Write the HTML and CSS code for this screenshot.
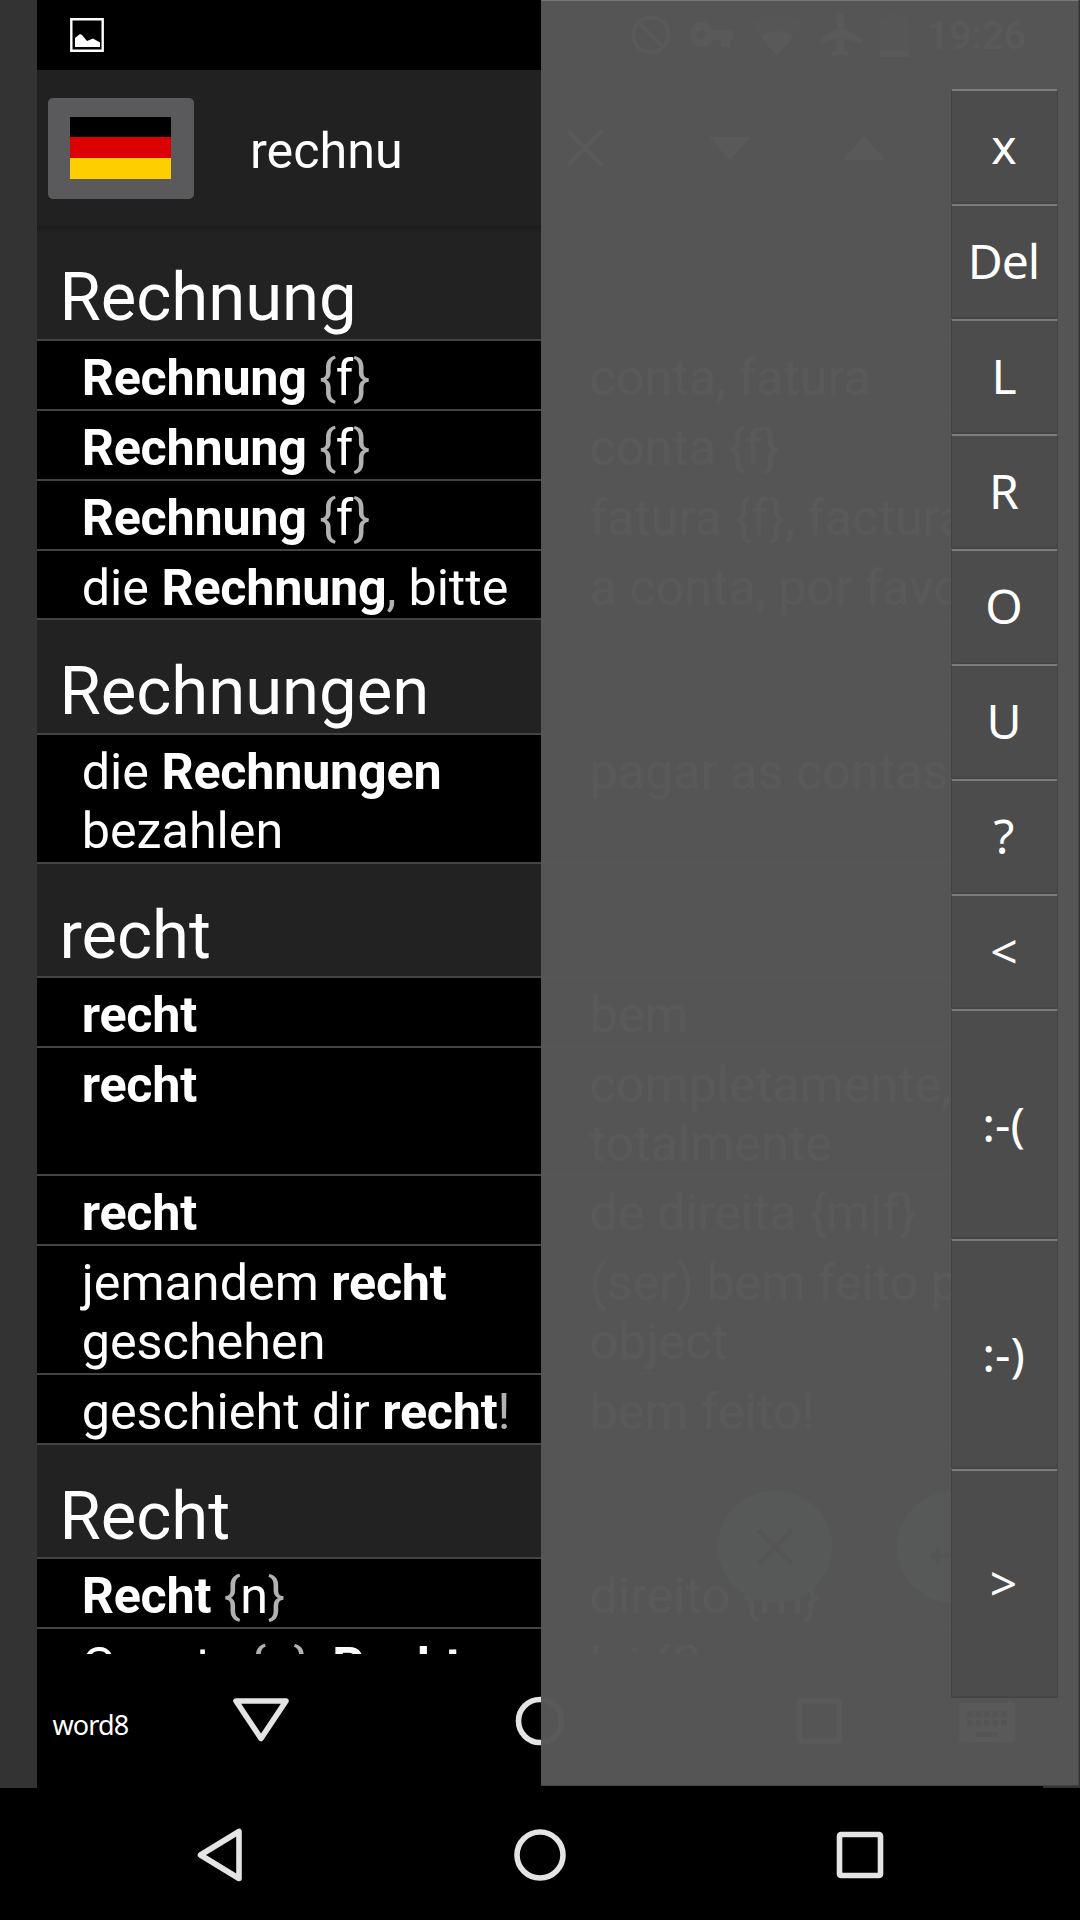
FILE: index.html
```html
<!DOCTYPE html>
<html lang="de">
<head>
<meta charset="utf-8">
<title>rechnu</title>
<link rel="stylesheet" href="styles.css">
</head>
<body>
<div class="screen">
  <div class="device">
    <main class="app">
      <header class="status">
        <svg class="picture-icon" width="34" height="34" viewBox="0 0 34 34"><path d="M1.3 1.3h31.4v31.4H1.3z" fill="none" stroke="#fff" stroke-width="2.4"/><path d="M5 29V20l5-4 2 1 5 6 6-2.500 7 4V29z" fill="#fff"/></svg>
        <div class="status-right">
          <svg width="40" height="40" viewBox="0 0 40 40" fill="none" stroke="#fff" stroke-width="3.600"><circle cx="20" cy="20" r="17.500"/><path d="M8 8l24 24"/></svg>
          <svg width="44" height="26" viewBox="0 0 44 26" fill="#fff"><path fill-rule="evenodd" d="M12.500 0a12.500 12.500 0 0 1 12 8.500H44v9h-3V25h-9v-7.500h-7.500A12.500 12.500 0 1 1 12.500 0zm0 8a4.500 4.500 0 1 0 0 9 4.500 4.500 0 0 0 0-9z"/></svg>
          <svg width="52" height="41" viewBox="0 0 52 41" fill="#fff"><path opacity=".35" d="M0 8Q26-8 52 8L26 41z"/><path d="M10 22q16-12 32 0L26 41z"/></svg>
          <svg width="41" height="42" viewBox="3 2 18 20" preserveAspectRatio="none" fill="#fff"><path d="M21 16v-2l-8-5V3.500a1.500 1.500 0 0 0-3 0V9l-8 5v2l8-2.500V19l-2 1.500V22l3.500-1 3.500 1v-1.500L13 19v-5.500z"/></svg>
          <svg width="29" height="44" viewBox="0 0 29 44" fill="#fff"><path opacity=".35" d="M9 0h11v5h9v34H0V5h9z"/><path d="M0 38h29v6H0z"/></svg>
          <span class="clock">19:26</span>
        </div>
      </header>
      <div class="search">
        <div class="lang"><div class="flag"><i class="black"></i><i class="red"></i><i class="gold"></i></div></div>
        <span class="query">rechnu</span>
        <div class="search-actions">
          <svg width="38" height="38" viewBox="0 0 38 38" stroke="#fff" stroke-width="4"><path d="M2 2l34 34M36 2L2 36"/></svg>
          <svg width="42" height="23" viewBox="0 0 42 23" fill="#fff"><path d="M0 0h42L21 23z"/></svg>
          <svg width="42" height="24" viewBox="0 0 42 24" fill="#fff"><path d="M0 24h42L21 0z"/></svg>
        </div>
      </div>
      <div class="list">
        <h2>Rechnung</h2>
        <div class="row"><p><b>Rechnung</b> <i>{</i>f<i>}</i></p><p>conta, fatura</p></div>
        <div class="row"><p><b>Rechnung</b> <i>{</i>f<i>}</i></p><p>conta <i>{</i>f<i>}</i></p></div>
        <div class="row"><p><b>Rechnung</b> <i>{</i>f<i>}</i></p><p>fatura <i>{</i>f<i>}</i>, factura</p></div>
        <div class="row"><p>die <b>Rechnung</b><i>,</i> bitte</p><p>a conta, por favor</p></div>
        <h2>Rechnungen</h2>
        <div class="row tall"><p>die <b>Rechnungen</b><br>bezahlen</p><p>pagar as contas</p></div>
        <h2>recht</h2>
        <div class="row"><p><b>recht</b></p><p>bem</p></div>
        <div class="row tall"><p><b>recht</b></p><p>completamente,<br>totalmente</p></div>
        <div class="row"><p><b>recht</b></p><p>de direita <i>{</i>m|f<i>}</i></p></div>
        <div class="row tall"><p>jemandem <b>recht</b><br>geschehen</p><p>(ser) bem feito por<br>object</p></div>
        <div class="row"><p>geschieht dir <b>recht</b><i>!</i></p><p>bem feito!</p></div>
        <h2>Recht</h2>
        <div class="row"><p><b>Recht</b> <i>{</i>n<i>}</i></p><p>direito <i>{</i>m<i>}</i></p></div>
        <div class="row"><p>Gesetz <i>{</i>n<i>}</i>, <b>Recht</b></p><p>lei <i>{</i>f<i>}</i></p></div>
        <div class="fabs">
          <svg width="114" height="112" viewBox="0 0 114 112"><ellipse cx="57" cy="56" rx="57" ry="56" fill="#80cbc4"/><path d="M40 39l34 34M74 39L40 73" stroke="#000" stroke-width="5"/></svg>
          <svg width="114" height="112" viewBox="0 0 114 112"><ellipse cx="57" cy="56" rx="57" ry="56" fill="#80cbc4"/><path d="M32 65l11-10v7h30v-14h5v19H43v8z"/></svg>
        </div>
      </div>
      <nav class="inner-nav">
        <span class="word">word8</span>
        <svg class="n-back" width="58" height="46" viewBox="0 0 58 46"><path d="M4 4h50L29 41.500z"/></svg>
        <svg class="n-home" width="50" height="50" viewBox="0 0 50 50"><circle cx="25" cy="25" r="21.500"/></svg>
        <svg class="n-recent" width="45" height="46" viewBox="0 0 45 46"><rect x="2.700" y="2.700" width="39.600" height="40.600" rx="1.500"/></svg>
        <svg class="n-keys" width="56" height="40" viewBox="0 0 56 40"><path fill-rule="evenodd" d="M4 0h48q4 0 4 4v32q0 4-4 4H4q-4 0-4-4V4q0-4 4-4zM8 9v6h6V9zm8.500 0v6h6V9zM25 9v6h6V9zm8.500 0v6h6V9zM42 9v6h6V9zM8 18v6h6v-6zm8.500 0v6h6v-6zM25 18v6h6v-6zm8.500 0v6h6v-6zM42 18v6h6v-6zM17 30v5h22v-5z"/></svg>
      </nav>
    </main>
  </div>
  <nav class="outer-nav">
    <svg class="o-back" width="48" height="56" viewBox="0 0 48 56"><path d="M4.500 28L43 4.500v47z"/></svg>
    <svg class="o-home" width="54" height="54" viewBox="0 0 54 54"><circle cx="27" cy="27" r="23"/></svg>
    <svg class="o-recent" width="48" height="48" viewBox="0 0 48 48"><rect x="3.500" y="3.500" width="41" height="41" rx="1.500"/></svg>
  </nav>
  <aside class="panel">
    <div class="keys">
      <div class="key">x</div>
      <div class="key">Del</div>
      <div class="key">L</div>
      <div class="key">R</div>
      <div class="key">O</div>
      <div class="key">U</div>
      <div class="key">?</div>
      <div class="key">&lt;</div>
      <div class="key big">:-(</div>
      <div class="key big">:-)</div>
      <div class="key big">&gt;</div>
    </div>
  </aside>
</div>
</body>
</html>
```
FILE: styles.css
```css
* { box-sizing: border-box; }
body { margin: 0; background: #000; }
svg { display: block; flex: none; }
i { font-style: normal; }

.screen {
  position: relative;
  width: 1080px;
  height: 1920px;
  overflow: hidden;
  background: #000;
  color: #fff;
  font-family: Roboto, sans-serif;
}
.device {
  height: 1788px;
  padding: 0 37px;
  background: #333;
}
.app {
  display: flex;
  flex-direction: column;
  height: 1788px;
  background: #000;
}

/* status bar */
.status {
  display: flex;
  align-items: center;
  justify-content: space-between;
  height: 70px;
  padding: 0 17px 0 33px;
}
.status-right { display: flex; align-items: center; gap: 18px; }
.clock { font-size: 39px; font-weight: 500; line-height: 70px; padding-top: 2px; }

/* search bar */
.search {
  display: flex;
  align-items: center;
  height: 156.400px;
  padding: 0 158px 0 11px;
  background: #212121;
}
.lang {
  display: flex;
  width: 146px;
  height: 101px;
  padding: 19px 22.500px 20px 22px;
  border-radius: 5px;
  background: #5a5a5c;
}
.flag { display: flex; flex-direction: column; width: 101px; }
.flag i { flex: 1; }
.black { background: #000; }
.red { background: #d00; }
.gold { background: #ffce00; }
.query { flex: 1; padding-left: 56px; padding-top: 4px; font-size: 50.300px; }
.search-actions { display: flex; align-items: center; gap: 92px; }
.search-actions svg:first-child { margin-right: 13px; }

/* word list */
.list {
  position: relative;
  height: 1427.600px;
  overflow: hidden;
}
.list::before {
  content: "";
  position: absolute;
  inset: 0 0 auto;
  height: 7px;
  background: linear-gradient(#1b1b1b, #222);
}
h2 {
  height: 114.600px;
  margin: 0;
  padding: 32px 22.400px 0;
  border-bottom: 2px solid #444;
  background: #222;
  font-size: 67px;
  font-weight: 400;
  line-height: 79px;
}
.row {
  display: grid;
  grid-template-columns: 503px 503px;
  height: 69.860px;
  border-bottom: 2px solid #444;
  background: #000;
  font-size: 50.300px;
  line-height: 58.700px;
}
.row.tall { height: 128.500px; }
.row p { margin: 0; padding: 8px 0 0 44.700px; white-space: nowrap; }
.row p + p { padding-left: 49.500px; }
.row i { letter-spacing: -.5px; }
.row p:first-child i { color: #b2b2b2; }
b { font-weight: 700; letter-spacing: -.25px; }
.fabs {
  position: absolute;
  left: 681px;
  top: 1265px;
  display: flex;
  gap: 65px;
}

/* navigation bars */
.inner-nav, .outer-nav { display: flex; align-items: flex-start; }
.inner-nav svg, .outer-nav svg {
  fill: none;
  stroke: #e4e4e4;
  stroke-width: 5.600px;
  stroke-linejoin: round;
}
.inner-nav { height: 134px; padding-left: 15.500px; }
.word {
  width: 179px;
  padding-top: 51px;
  font: 27px/40px "Noto Sans", sans-serif;
  letter-spacing: -.9px;
}
.n-back { margin-top: 43px; }
.n-home { margin: 42px 0 0 225px; }
.n-recent { margin: 44px 0 0 232px; }
.inner-nav .n-keys { margin: 48px 0 0 117px; fill: #e4e4e4; stroke: none; }
.outer-nav {
  align-items: center;
  justify-content: space-between;
  height: 132px;
  padding: 1px 196px 0 196px;
}

/* floating key panel */
.panel {
  position: absolute;
  left: 541px;
  top: 0;
  display: flex;
  justify-content: flex-end;
  width: 538px;
  height: 1786px;
  padding: 88px 20px 0;
  border: solid rgba(70, 70, 70, .97);
  border-width: 0 1px 1px 0;
  border-top: 1px solid #777;
  background: rgba(86, 86, 86, .984);
  background-clip: padding-box;
}
.keys { display: flex; flex-direction: column; width: 107px; }
.key {
  display: flex;
  align-items: center;
  justify-content: center;
  height: 115px;
  padding: 0 2px 3px 0;
  border: 1px solid #434343;
  border-top: 2px solid #7c7c7c;
  border-radius: 2px;
  background: #4c4c4c;
  box-shadow: inset 0 -1px #474747;
  font: 48px "Noto Sans", sans-serif;
  letter-spacing: -1px;
}
.key.big { height: 230px; letter-spacing: 0; }
.key.big:last-child { height: 229px; }
```
